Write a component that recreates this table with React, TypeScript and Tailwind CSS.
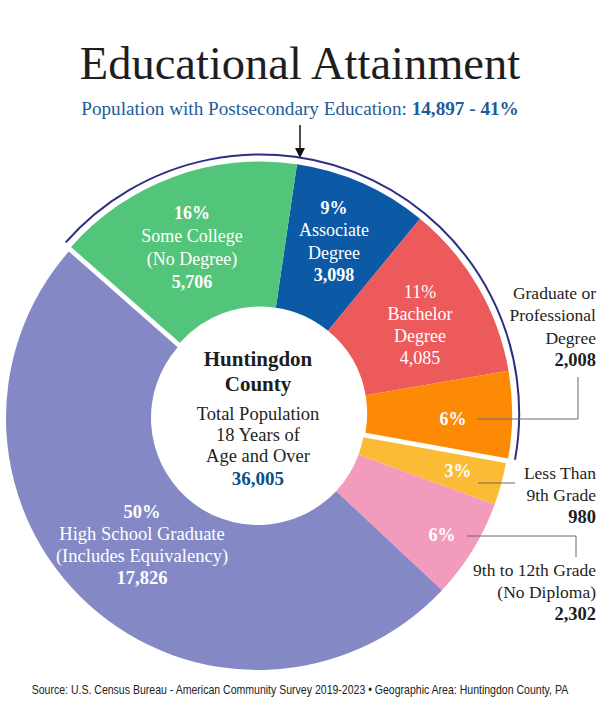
import React from "react";

const CX = 258;
const CY = 418;
const R_OUT = 252;
const R_IN = 107;
const START = 8.4;

type Slice = { key: string; value: number; color: string; post: boolean };

const slices: Slice[] = [
  { key: "associate", value: 3098, color: "#0c5aa6", post: true },
  { key: "bachelor", value: 4085, color: "#ec5a5b", post: true },
  { key: "graduate", value: 2008, color: "#fd8a05", post: true },
  { key: "less9", value: 980, color: "#fbbb35", post: false },
  { key: "grade12", value: 2302, color: "#f39bbd", post: false },
  { key: "highschool", value: 17826, color: "#8489c6", post: false },
  { key: "college", value: 5706, color: "#53c57a", post: true },
];

const total = slices.reduce((sum, s) => sum + s.value, 0);

function pt(angle: number, radius: number, ox = 0, oy = 0) {
  const a = (angle * Math.PI) / 180;
  return [CX + ox + radius * Math.sin(a), CY + oy - radius * Math.cos(a)];
}

function ringPath(a0: number, a1: number, ox: number, oy: number) {
  const large = a1 - a0 > 180 ? 1 : 0;
  const [x0, y0] = pt(a0, R_OUT, ox, oy);
  const [x1, y1] = pt(a1, R_OUT, ox, oy);
  const [x2, y2] = pt(a1, R_IN, ox, oy);
  const [x3, y3] = pt(a0, R_IN, ox, oy);
  return `M${x0} ${y0} A${R_OUT} ${R_OUT} 0 ${large} 1 ${x1} ${y1} L${x2} ${y2} A${R_IN} ${R_IN} 0 ${large} 0 ${x3} ${y3} Z`;
}

function Donut() {
  let angle = START;
  const arcs = slices.map((s) => {
    const a0 = angle;
    const a1 = angle + (s.value / total) * 360;
    angle = a1;
    return { ...s, a0, a1 };
  });

  // postsecondary group runs from the start of "college" round to the end of "graduate"
  const groupStart = arcs[6].a0 - 360;
  const groupEnd = arcs[2].a1;
  const mid = ((groupStart + groupEnd) / 2) * (Math.PI / 180);
  const ox = 5 * Math.sin(mid);
  const oy = -5 * Math.cos(mid);

  const ringR = 259;
  const [sx, sy] = pt(groupStart, ringR, ox, oy);
  const [ex, ey] = pt(groupEnd, ringR, ox, oy);

  return (
    <svg className="absolute inset-0" width={600} height={555} viewBox="0 120 600 555">
      {arcs.map((s) => (
        <path key={s.key} d={ringPath(s.a0, s.a1, s.post ? ox : 0, s.post ? oy : 0)} fill={s.color} />
      ))}
      <path
        d={`M${sx} ${sy} A${ringR} ${ringR} 0 0 1 ${ex} ${ey}`}
        fill="none"
        stroke="#2a2f85"
        strokeWidth={2}
      />
      {/* arrow from the subtitle */}
      <line x1={300} y1={125} x2={300} y2={150} stroke="#111" strokeWidth={1.5} />
      <path d="M295 148 L300 158 L305 148 Z" fill="#111" />
      {/* leader lines */}
      <polyline points="477,419 578,419 578,377" fill="none" stroke="#6b6b6b" strokeWidth={1} />
      <polyline points="478,483 515,483" fill="none" stroke="#6b6b6b" strokeWidth={1} />
      <polyline points="467,536 576,536 576,557" fill="none" stroke="#6b6b6b" strokeWidth={1} />
    </svg>
  );
}

export default function App() {
  return (
    <div className="w-[600px] h-[709px] bg-white flex flex-col items-center font-['Liberation_Serif',serif] text-[#1e1e1e]">
      <h1 className="pt-[36px] text-[46.5px] leading-[56px] font-normal">Educational Attainment</h1>
      <p className="mt-[5px] text-[19.2px] leading-[23px] text-[#1d5c99]">
        Population with Postsecondary Education: <span className="font-bold">14,897 - 41%</span>
      </p>

      <div className="relative w-[600px] h-[555px]">
        <Donut />

        <div className="absolute left-[192px] top-[82px] -translate-x-1/2 text-center text-white text-[18px] leading-[23px] whitespace-nowrap">
          <p className="font-bold">16%</p>
          <p>Some College</p>
          <p>(No Degree)</p>
          <p className="font-bold">5,706</p>
        </div>

        <div className="absolute left-[334px] top-[77px] -translate-x-1/2 text-center text-white text-[18px] leading-[22.4px] whitespace-nowrap">
          <p className="font-bold">9%</p>
          <p>Associate</p>
          <p>Degree</p>
          <p className="font-bold">3,098</p>
        </div>

        <div className="absolute left-[420px] top-[161px] -translate-x-1/2 text-center text-white text-[18px] leading-[22px] whitespace-nowrap">
          <p>11%</p>
          <p>Bachelor</p>
          <p>Degree</p>
          <p>4,085</p>
        </div>

        <div className="absolute right-[4px] top-[162px] text-right text-[17.5px] leading-[22.3px] whitespace-nowrap">
          <p>Graduate or</p>
          <p>Professional</p>
          <p>Degree</p>
          <p className="font-bold text-[18.5px]">2,008</p>
        </div>

        <p className="absolute left-[453px] top-[288px] -translate-x-1/2 text-white text-[18px] leading-[23px] font-bold">6%</p>
        <p className="absolute left-[458px] top-[340px] -translate-x-1/2 text-white text-[18px] leading-[23px] font-bold">3%</p>
        <p className="absolute left-[442px] top-[404px] -translate-x-1/2 text-white text-[18px] leading-[23px] font-bold">6%</p>

        <div className="absolute right-[4px] top-[342px] text-right text-[17.5px] leading-[22px] whitespace-nowrap">
          <p>Less Than</p>
          <p>9th Grade</p>
          <p className="font-bold text-[18.5px]">980</p>
        </div>

        <div className="absolute right-[4px] top-[439px] text-right text-[17.5px] leading-[22px] whitespace-nowrap">
          <p>9th to 12th Grade</p>
          <p>(No Diploma)</p>
          <p className="font-bold text-[18.5px]">2,302</p>
        </div>

        <div className="absolute left-[142px] top-[381px] -translate-x-1/2 text-center text-white text-[18.5px] leading-[22px] whitespace-nowrap">
          <p className="font-bold">50%</p>
          <p>High School Graduate</p>
          <p>(Includes Equivalency)</p>
          <p className="font-bold">17,826</p>
        </div>

        <div className="absolute left-[258px] top-[227px] -translate-x-1/2 flex flex-col items-center text-center whitespace-nowrap">
          <p className="font-bold text-[21px] leading-[25px]">Huntingdon</p>
          <p className="font-bold text-[21px] leading-[25px]">County</p>
          <p className="mt-[7px] text-[18.5px] leading-[21px]">Total Population</p>
          <p className="text-[18.5px] leading-[21px]">18 Years of</p>
          <p className="text-[18.5px] leading-[21px]">Age and Over</p>
          <p className="font-bold text-[19px] leading-[24px] text-[#0c4f8e]">36,005</p>
        </div>
      </div>

      <p className="mt-[7px] whitespace-nowrap scale-x-[0.78] text-[13.5px] leading-[16px] text-[#222] font-['Liberation_Sans',sans-serif]">
        Source: U.S. Census Bureau - American Community Survey 2019-2023 • Geographic Area: Huntingdon County, PA
      </p>
    </div>
  );
}
